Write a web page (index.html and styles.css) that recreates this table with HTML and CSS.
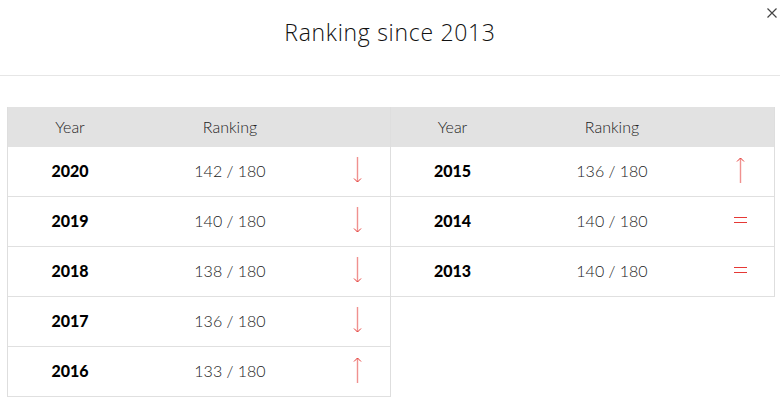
FILE: index.html
```html
<!DOCTYPE html>
<html>
<head>
<meta charset="utf-8">
<link rel="stylesheet" href="styles.css">
</head>
<body>
<div class="modal">
  <div class="modal-head">
    <h1 class="title">Ranking since 2013</h1>
    <button class="close" aria-label="Close">
      <svg width="10" height="10" viewBox="0 0 10 10"><path d="M0.5 0.5 L9.5 9.5 M9.5 0.5 L0.5 9.5" stroke="#444" stroke-width="1.2" fill="none"/></svg>
    </button>
  </div>
  <div class="tables">
    <div class="table">
      <div class="row head"><span>Year</span><span>Ranking</span><span></span></div>
      <div class="row"><b>2020</b><span>142 / 180</span><span class="ic"><svg width="9" height="26" viewBox="0 0 9 26"><path d="M4.5 0 V25" stroke="#e53935" stroke-width="1.4" opacity="0.55"/><path d="M1 21.5 L4.5 25 L8 21.5" stroke="#e53935" stroke-width="1" fill="none"/></svg></span></div>
      <div class="row"><b>2019</b><span>140 / 180</span><span class="ic"><svg width="9" height="26" viewBox="0 0 9 26"><path d="M4.5 0 V25" stroke="#e53935" stroke-width="1.4" opacity="0.55"/><path d="M1 21.5 L4.5 25 L8 21.5" stroke="#e53935" stroke-width="1" fill="none"/></svg></span></div>
      <div class="row"><b>2018</b><span>138 / 180</span><span class="ic"><svg width="9" height="26" viewBox="0 0 9 26"><path d="M4.5 0 V25" stroke="#e53935" stroke-width="1.4" opacity="0.55"/><path d="M1 21.5 L4.5 25 L8 21.5" stroke="#e53935" stroke-width="1" fill="none"/></svg></span></div>
      <div class="row"><b>2017</b><span>136 / 180</span><span class="ic"><svg width="9" height="26" viewBox="0 0 9 26"><path d="M4.5 0 V25" stroke="#e53935" stroke-width="1.4" opacity="0.55"/><path d="M1 21.5 L4.5 25 L8 21.5" stroke="#e53935" stroke-width="1" fill="none"/></svg></span></div>
      <div class="row"><b>2016</b><span>133 / 180</span><span class="ic"><svg width="9" height="26" viewBox="0 0 9 26"><path d="M4.5 1 V26" stroke="#e53935" stroke-width="1.4" opacity="0.55"/><path d="M1 4.5 L4.5 1 L8 4.5" stroke="#e53935" stroke-width="1" fill="none"/></svg></span></div>
    </div>
    <div class="table right">
      <div class="row head"><span>Year</span><span>Ranking</span><span></span></div>
      <div class="row"><b>2015</b><span>136 / 180</span><span class="ic"><svg width="9" height="26" viewBox="0 0 9 26"><path d="M4.5 1 V26" stroke="#e53935" stroke-width="1.4" opacity="0.55"/><path d="M1 4.5 L4.5 1 L8 4.5" stroke="#e53935" stroke-width="1" fill="none"/></svg></span></div>
      <div class="row"><b>2014</b><span>140 / 180</span><span class="ic"><svg width="13" height="6" viewBox="0 0 13 6"><path d="M0 0.5 H13 M0 5.5 H13" stroke="#e53935" stroke-width="1.2"/></svg></span></div>
      <div class="row"><b>2013</b><span>140 / 180</span><span class="ic"><svg width="13" height="6" viewBox="0 0 13 6"><path d="M0 0.5 H13 M0 5.5 H13" stroke="#e53935" stroke-width="1.2"/></svg></span></div>
    </div>
  </div>
</div>
</body>
</html>
```

FILE: styles.css
```css
* { box-sizing: border-box; }
html, body { margin: 0; padding: 0; background: #fff; }
body { font-family: Lato, "Open Sans", sans-serif; color: #333; }

.modal { position: relative; width: 780px; }

.modal-head {
  height: 76px;
  border-bottom: 1px solid #e6e6e6;
  display: flex;
  justify-content: center;
  padding-top: 15px;
}
.title {
  margin: 0;
  font-family: "Open Sans", Lato, sans-serif;
  font-size: 23px;
  font-weight: 300;
  line-height: 34px;
  color: #111;
  letter-spacing: 0.7px;
}
.close {
  position: absolute;
  top: 8px;
  right: 3px;
  border: 0;
  background: none;
  padding: 0;
  width: 10px;
  height: 10px;
  display: block;
}
.close svg { display: block; }

.tables {
  display: flex;
  align-items: flex-start;
  padding: 31px 5px 0 7px;
}
.table {
  width: 384px;
  border-left: 1px solid #dedede;
  border-right: 1px solid #dedede;
}
.table.right { border-left: 0; width: 384px; }

.row {
  display: grid;
  grid-template-columns: 124px 196px 1fr;
  height: 50px;
  align-items: center;
  border-bottom: 1px solid #e0e0e0;
  font-size: 16px;
  font-weight: 300;
  color: #222;
  padding-bottom: 3px;
}
.table.right .row { grid-template-columns: 123px 196px 1fr; }
.row > * { text-align: center; }
.row b { font-weight: 900; color: #000; }
.row.head {
  height: 40px;
  background: #e2e2e2;
  border-bottom: 0;
  color: #222;
  padding-bottom: 2px;
}
.ic { display: flex; justify-content: center; padding-right: 4px; }
.ic svg { display: block; }
```
